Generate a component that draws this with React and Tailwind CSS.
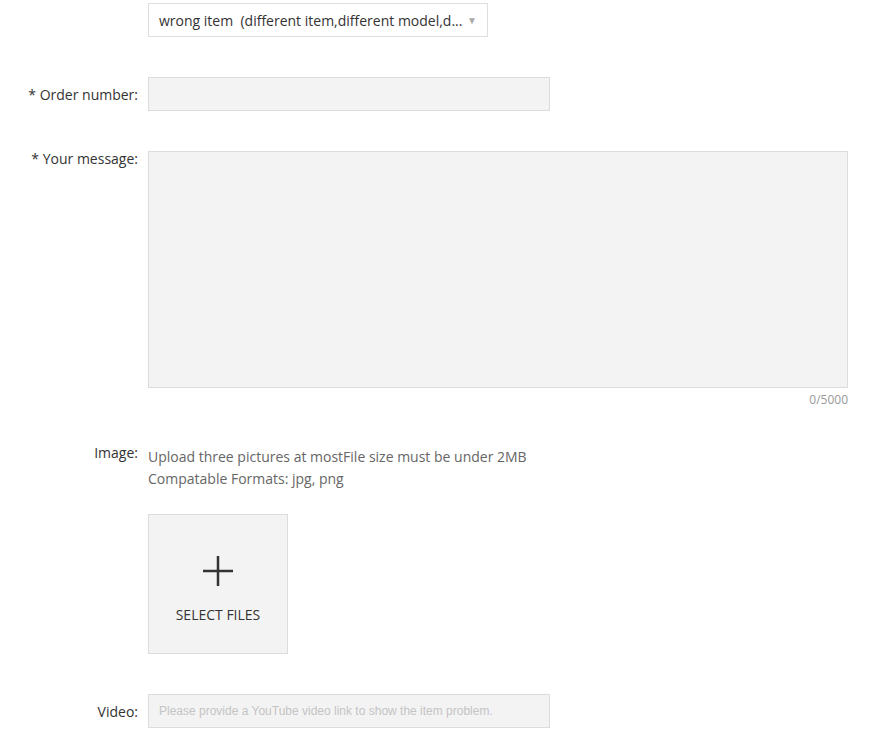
import React, { useState } from 'react';

const font = { fontFamily: '"Open Sans", "Liberation Sans", sans-serif' };

function Row({ label, children, className = '', labelClass = '' }) {
  return (
    <div className={`flex ${className}`}>
      <div className={`w-[138px] shrink-0 text-right text-[14px] text-[#333] ${labelClass}`}>{label}</div>
      <div className="ml-[10px] flex-1">{children}</div>
    </div>
  );
}

export default function App() {
  const [msg, setMsg] = useState('');

  return (
    <div className="w-[871px] h-[748px] bg-white overflow-hidden" style={font}>
      {/* reason select */}
      <Row label="" className="pt-[3px]">
        <div className="w-[340px] h-[34px] border border-[#dedede] bg-white flex items-center pl-[10px] pr-[10px]">
          <span className="flex-1 truncate text-[14px] text-[#333] whitespace-pre">wrong item  (different item,different model,d...</span>
          <span className="ml-1 text-[10px] text-[#aaa]">▼</span>
        </div>
      </Row>

      {/* order number */}
      <Row label="* Order number:" className="mt-[40px] items-center">
        <input className="w-[402px] h-[34px] border border-[#dcdcdc] bg-[#f3f3f3] outline-none px-[10px] text-[14px]" />
      </Row>

      {/* message */}
      <Row label="* Your message:" className="mt-[40px]" labelClass="leading-[16px]">
        <textarea
          value={msg}
          onChange={(e) => setMsg(e.target.value)}
          className="block w-[700px] h-[237px] border border-[#dcdcdc] bg-[#f3f3f3] outline-none resize-none p-[10px] text-[14px]"
        />
        <div className="w-[700px] text-right text-[12px] text-[#999] mt-[4px] leading-[16px]">{msg.length}/5000</div>
      </Row>

      {/* image */}
      <Row label="Image:" className="mt-[38px]" labelClass="leading-[22px] -mt-[4px]">
        <div className="text-[14px] leading-[22px] text-[#666]">
          <div>Upload three pictures at mostFile size must be under 2MB</div>
          <div>Compatable Formats: jpg, png</div>
        </div>
        <button className="mt-[24px] w-[140px] h-[140px] border border-[#dcdcdc] bg-[#f3f3f3] flex flex-col items-center">
          <svg width="34" height="34" viewBox="0 0 34 34" className="mt-[39px]">
            <path d="M17 2v30M2 17h30" stroke="#333" strokeWidth="2.5" />
          </svg>
          <span className="mt-[16px] text-[14px] text-[#333]">SELECT FILES</span>
        </button>
      </Row>

      {/* video */}
      <Row label="Video:" className="mt-[40px] items-center">
        <input
          placeholder="Please provide a YouTube video link to show the item problem."
          className="w-[402px] h-[34px] border border-[#dcdcdc] bg-[#f3f3f3] outline-none px-[10px] text-[12px] placeholder:text-[#c4c4c4]"
          style={{ fontFamily: '"Liberation Sans", Arial, sans-serif' }}
        />
      </Row>
    </div>
  );
}
